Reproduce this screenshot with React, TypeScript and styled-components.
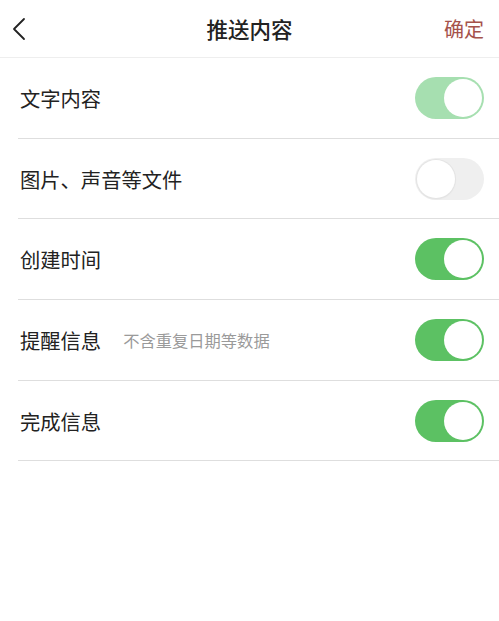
import React, { useState } from 'react';
import styled, { createGlobalStyle } from 'styled-components';

const GlobalStyle = createGlobalStyle`
  html, body {
    margin: 0;
    padding: 0;
    background: #fff;
  }
  body {
    font-family: "Noto Sans CJK SC", "Noto Sans", sans-serif;
  }
`;

const Page = styled.div`
  width: 499px;
  min-height: 621px;
  background: #fff;
`;

const Header = styled.header`
  height: 57px;
  display: grid;
  grid-template-columns: 80px 1fr 80px;
  align-items: center;
  border-bottom: 1px solid #eeeeee;
`;

const BackButton = styled.button`
  justify-self: start;
  margin-left: 11px;
  padding: 0;
  border: none;
  background: none;
  display: flex;
  align-items: center;
  cursor: pointer;
`;

const Title = styled.h1`
  margin: 0;
  text-align: center;
  font-size: 21.5px;
  font-weight: 500;
  color: #222;
`;

const Confirm = styled.button`
  justify-self: end;
  margin-right: 15px;
  padding: 0;
  border: none;
  background: none;
  font-family: inherit;
  font-size: 20px;
  color: #a5524b;
  cursor: pointer;
`;

const List = styled.ul`
  list-style: none;
  margin: 0;
  padding: 0 0 0 18px;
`;

const Row = styled.li`
  height: 79.7px;
  display: flex;
  align-items: center;
  padding-right: 15px;
  border-bottom: 1px solid #dedede;
`;

const Label = styled.span`
  font-size: 20.3px;
  color: #222;
  padding-left: 2px;
`;

const Hint = styled.span`
  margin-left: 22px;
  font-size: 16.3px;
  color: #9a9a9a;
`;

const Spacer = styled.div`
  flex: 1;
`;

const Track = styled.button<{ $on: boolean; $faded?: boolean }>`
  position: relative;
  width: 69px;
  height: 42px;
  padding: 0;
  border: none;
  border-radius: 21px;
  cursor: pointer;
  background: ${p => (p.$on ? (p.$faded ? '#a6dfb0' : '#5cc163') : '#efefef')};
  transition: background 0.2s;
`;

const Knob = styled.span<{ $on: boolean }>`
  position: absolute;
  top: 2px;
  left: ${p => (p.$on ? '29px' : '2px')};
  width: 38px;
  height: 38px;
  border-radius: 50%;
  background: #fff;
  box-shadow: ${p => (p.$on ? 'none' : '0 0 0 1px #e4e4e4, 0 1px 2px rgba(0,0,0,0.08)')};
  transition: left 0.2s;
`;

type Item = { label: string; hint?: string; on: boolean; faded?: boolean };

const initial: Item[] = [
  { label: '文字内容', on: true, faded: true },
  { label: '图片、声音等文件', on: false },
  { label: '创建时间', on: true },
  { label: '提醒信息', hint: '不含重复日期等数据', on: true },
  { label: '完成信息', on: true },
];

const Toggle = ({ on, faded, onClick }: { on: boolean; faded?: boolean; onClick: () => void }) => (
  <Track $on={on} $faded={faded} onClick={onClick} aria-pressed={on}>
    <Knob $on={on} />
  </Track>
);

export default function App() {
  const [items, setItems] = useState(initial);

  // the first switch is locked on (shown faded), the rest can be flipped
  const flip = (i: number) =>
    setItems(prev => prev.map((it, j) => (j === i && !it.faded ? { ...it, on: !it.on } : it)));

  return (
    <Page>
      <GlobalStyle />
      <Header>
        <BackButton aria-label="返回">
          <svg width="16" height="24" viewBox="0 0 16 24">
            <path d="M13 2 L3 12 L13 22" fill="none" stroke="#222" strokeWidth="1.8" strokeLinecap="round" strokeLinejoin="round" />
          </svg>
        </BackButton>
        <Title>推送内容</Title>
        <Confirm>确定</Confirm>
      </Header>
      <List>
        {items.map((it, i) => (
          <Row key={it.label}>
            <Label>{it.label}</Label>
            {it.hint && <Hint>{it.hint}</Hint>}
            <Spacer />
            <Toggle on={it.on} faded={it.faded} onClick={() => flip(i)} />
          </Row>
        ))}
      </List>
    </Page>
  );
}
